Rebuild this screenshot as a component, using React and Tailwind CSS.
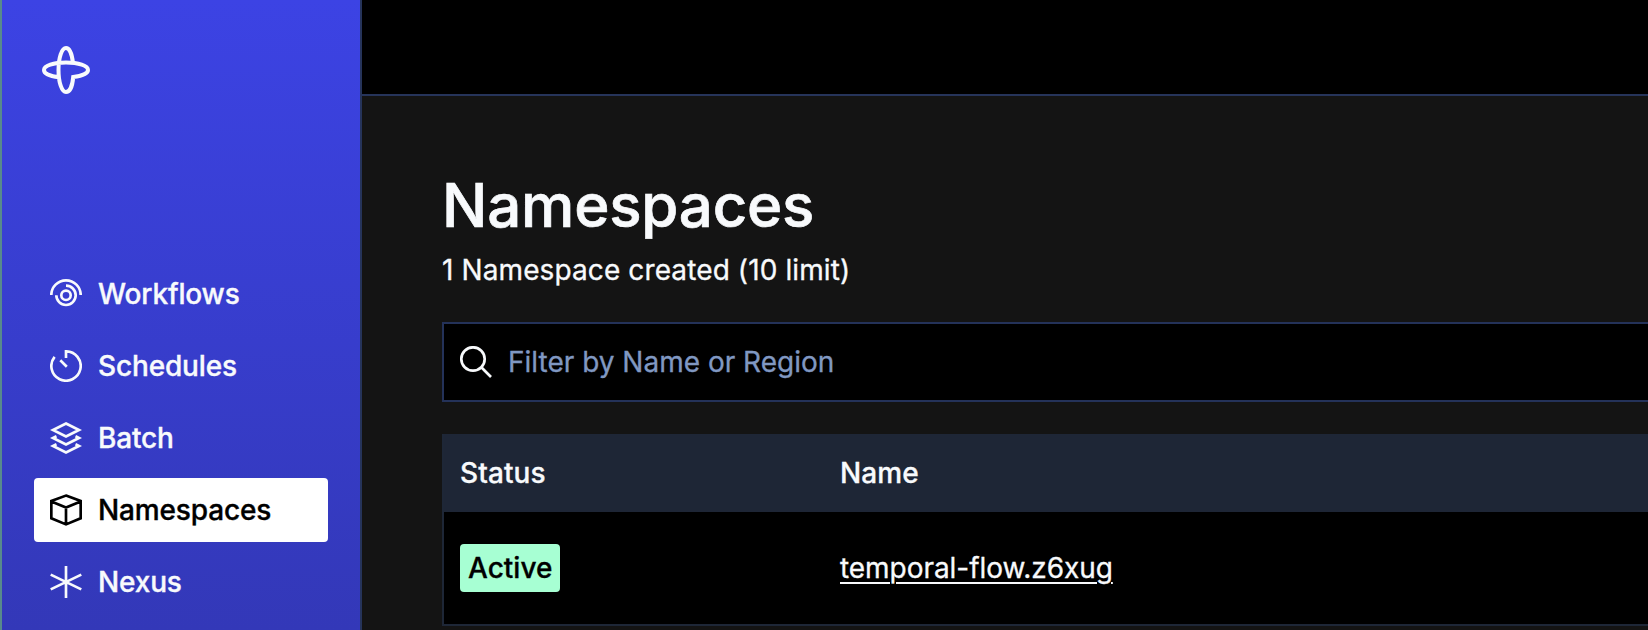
const ic = { width: 32, height: 32, viewBox: '0 0 32 32', fill: 'none', stroke: 'currentColor', strokeWidth: 2.67, className: 'shrink-0' };

const Workflows = () => (
  <svg {...ic}>
    <path d="M1.300 17a14.700 14.700 0 0 1 29.400 0" />
    <path d="M6.300 17.300a9.700 9.700 0 1 0 9.700-9.700" />
    <circle cx="16" cy="17.300" r="4.700" />
  </svg>
);
const Schedules = () => (
  <svg {...ic}>
    <path d="M16 8V1.330A14.670 14.670 0 1 1 4.600 6.800M10.300 10.300l6.500 6.500" />
  </svg>
);
const Batch = () => (
  <svg {...ic}>
    <path d="M16 1.500L29 8l-13 6.500L3 8z" />
    <path d="M6.500 14.300L3 16l13 6.500L29 16l-3.500-1.700" />
    <path d="M6.500 22.300L3 24l13 6.500L29 24l-3.500-1.700" />
  </svg>
);
const Cube = () => (
  <svg {...ic}>
    <path d="M16 1.600L30.670 7v17.300L16 30.400 1.330 24.300V7zM1.330 7.500L16 13.500l14.670-6M16 13.500v17" />
  </svg>
);
const Nexus = () => (
  <svg {...ic}>
    <path d="M16 0v32M.7 8.600l30.600 14.800M31.300 8.600L.7 23.400" />
  </svg>
);

const items = [
  ['Workflows', Workflows],
  ['Schedules', Schedules],
  ['Batch', Batch],
  ['Namespaces', Cube],
  ['Nexus', Nexus],
];

export default function App() {
  return (
    <div className="flex h-[630px] w-[1648px] overflow-hidden bg-[#141414] font-['Inter',sans-serif] text-[28px] leading-10 text-[#f8fafc]">
      <aside className="flex w-[362px] shrink-0 flex-col border-r-2 border-l-2 border-r-[#26345a] border-l-[#588a8c] bg-linear-to-b from-[#3c43e4] to-[#3338b8] pl-8 pr-8">
        <svg width="48" height="48" viewBox="0 0 48 48" fill="none" stroke="currentColor" strokeWidth="4" className="mt-[46px] ml-2 shrink-0">
          <path d="M31 17C30 8 27.500 2 24 2c-4.200 0-7.500 9.500-7.500 22S19.800 46 24 46c3.700 0 6.500-6 7.200-15C40 30 46 27.500 46 24c0-4.200-9.500-7.500-22-7.500S2 19.800 2 24c0 3.600 6 6.300 15 7.200" />
        </svg>
        <nav className="mt-[168px] flex flex-col gap-2 tracking-[-0.15px] [-webkit-text-stroke:0.35px_currentColor]">
          {items.map(([label, Icon]) => (
            <a
              key={label}
              className={
                label === 'Namespaces'
                  ? 'flex h-16 items-center gap-4 rounded bg-white px-4 font-medium text-black'
                  : 'flex h-16 items-center gap-4 rounded px-4 font-medium'
              }
            >
              <Icon />
              <span>{label}</span>
            </a>
          ))}
        </nav>
      </aside>
      <div className="flex min-w-0 flex-1 flex-col">
        <header className="h-24 shrink-0 border-b-2 border-[#26345a] bg-black" />
        <main className="flex flex-col pl-20 pt-[71px]">
          <h1 className="text-[60px] leading-[76px] font-medium tracking-[-0.2px] [-webkit-text-stroke:0.7px_currentColor]">Namespaces</h1>
          <p className="mt-[7px] tracking-[0.11px] [-webkit-text-stroke:0.3px_currentColor]">1 Namespace created (10 limit)</p>
          <div className="mt-8 flex h-20 items-center gap-4 border-y-2 border-l-2 border-[#243259] bg-black px-4">
            <svg {...ic}>
              <circle cx="13" cy="13" r="11.700" />
              <path d="M21.300 21.300l9.700 9.700" />
            </svg>
            <span className="text-[#8098c2] [-webkit-text-stroke:0.3px_currentColor]">Filter by Name or Region</span>
          </div>
          <div className="mt-8 flex flex-col border-b-2 border-l-2 border-[#1e2737] bg-black [-webkit-text-stroke:0.3px_currentColor]">
            <div className="flex h-[78px] items-center bg-[#1e2636] px-4 font-medium tracking-[0.1px]">
              <span className="w-[380px]">Status</span>
              <span>Name</span>
            </div>
            <div className="flex h-28 items-center px-4">
              <div className="flex w-[380px]">
                <span className="flex h-12 items-center rounded bg-[#a7ffd3] px-2 font-medium text-black">Active</span>
              </div>
              <a className="tracking-[-0.05px] underline decoration-2 underline-offset-4">temporal-flow.z6xug</a>
            </div>
          </div>
        </main>
      </div>
    </div>
  );
}
